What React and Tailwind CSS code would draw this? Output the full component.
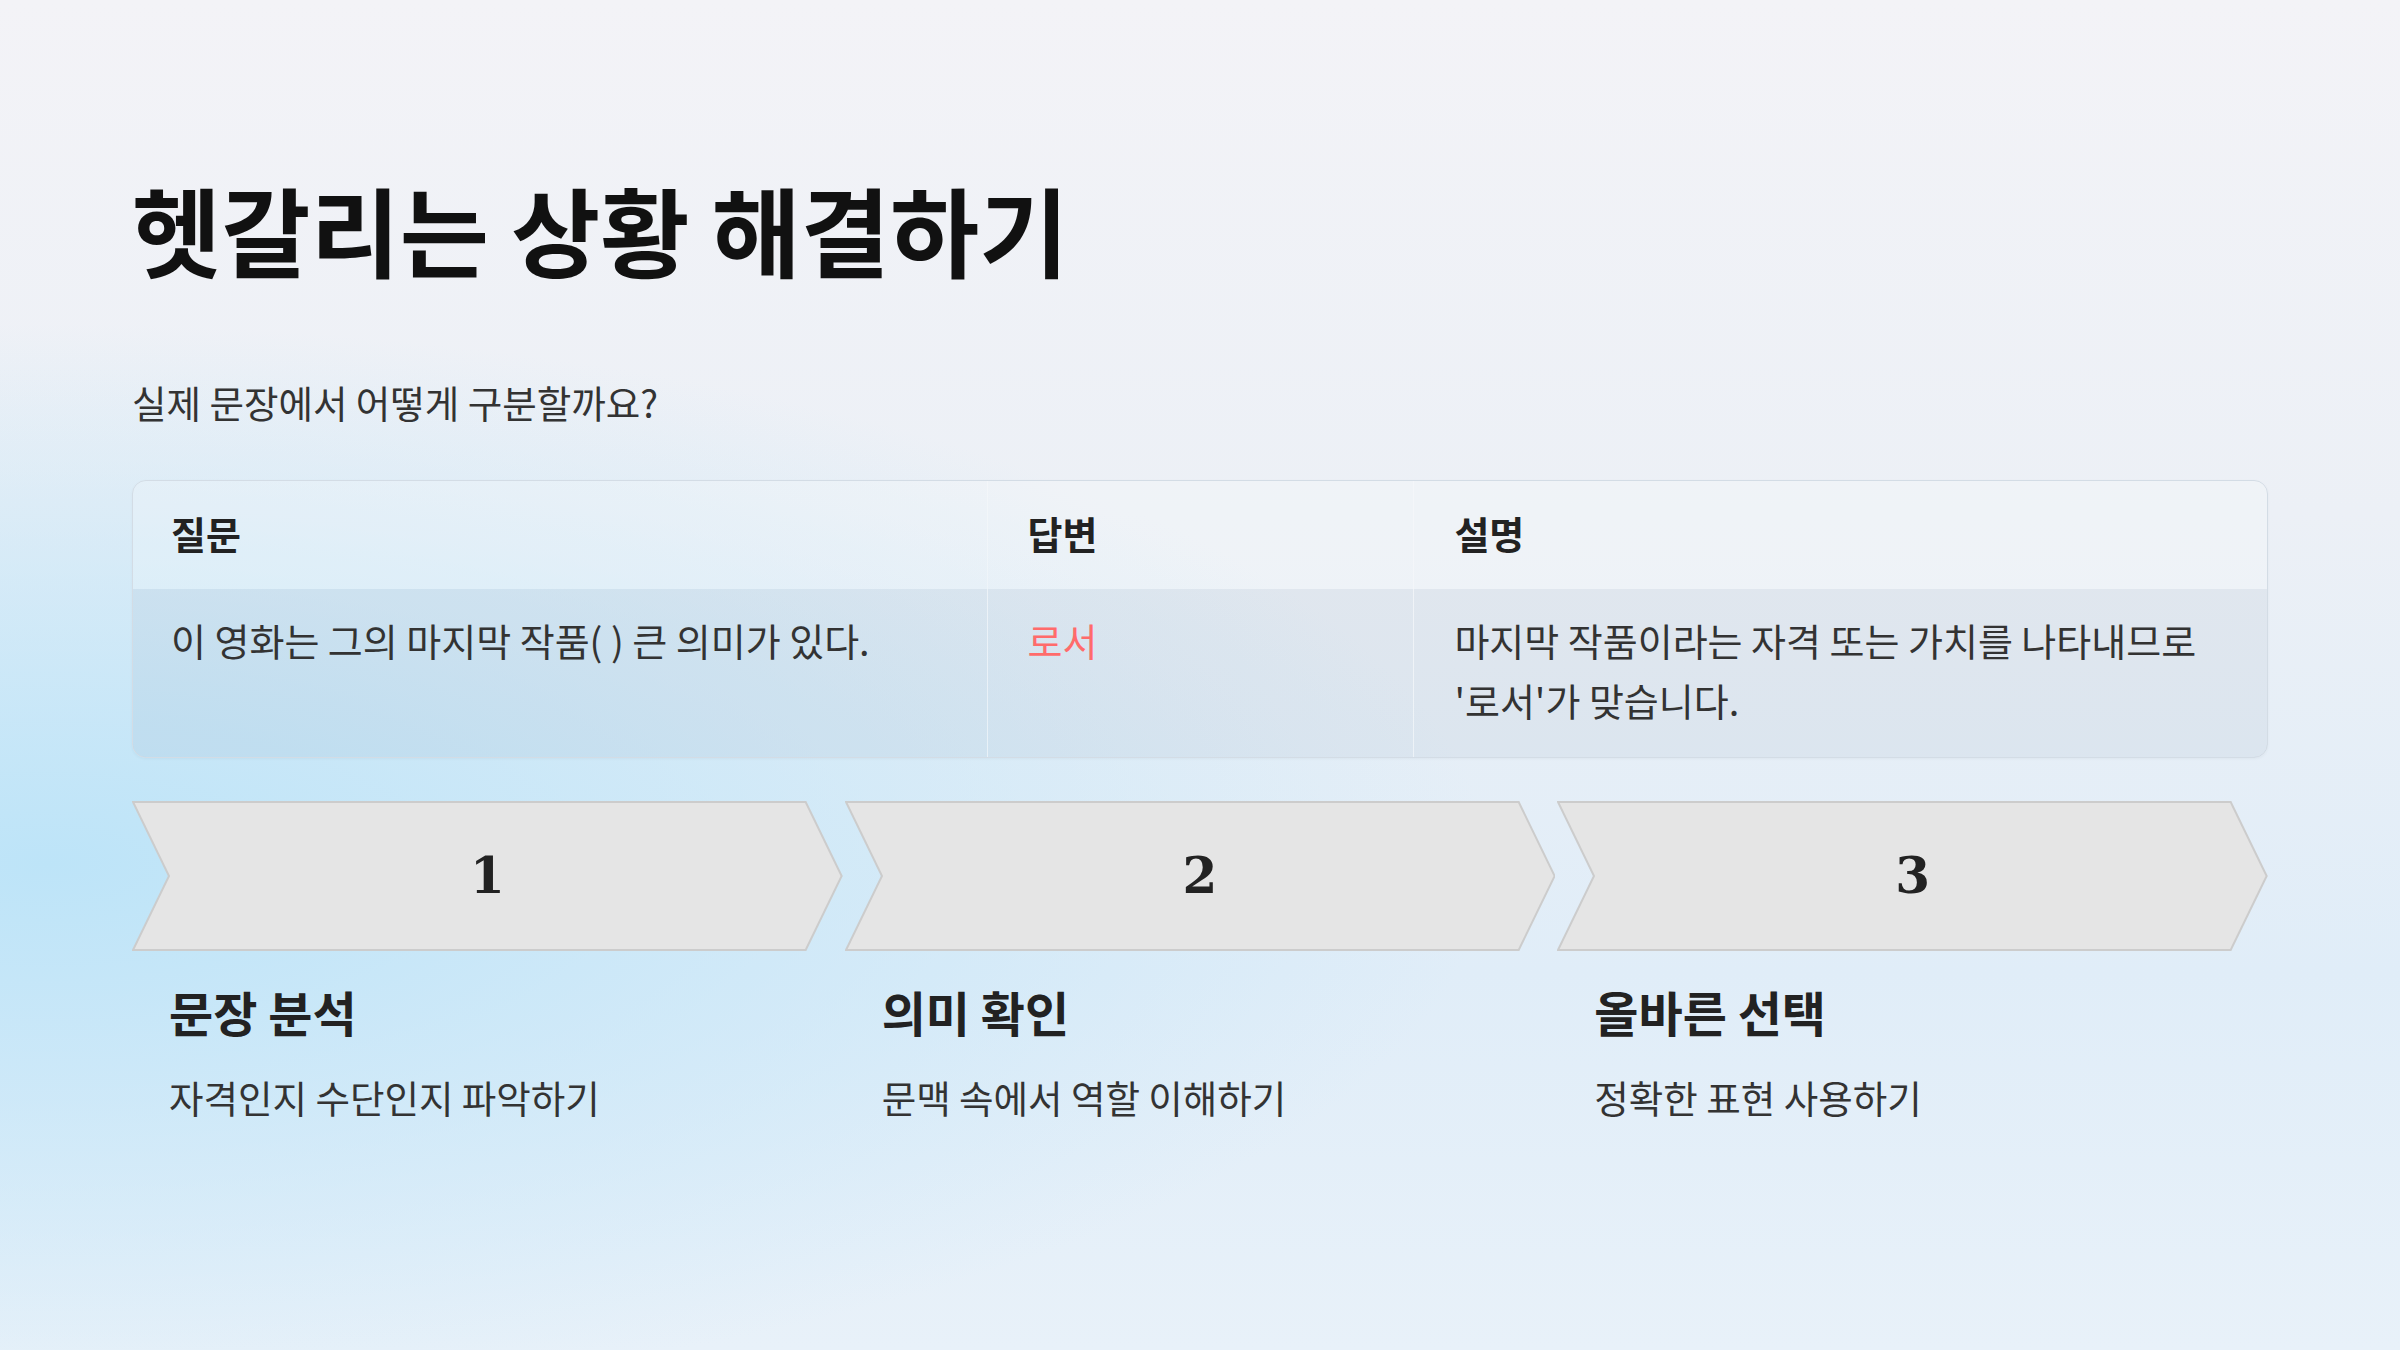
import React from 'react';

const rows = {
    question: '이 영화는 그의 마지막 작품( ) 큰 의미가 있다.',
    answer: '로서',
    reason: "마지막 작품이라는 자격 또는 가치를 나타내므로 '로서'가 맞습니다.",
};

const steps = [
    { num: '1', title: '문장 분석', desc: '자격인지 수단인지 파악하기' },
    { num: '2', title: '의미 확인', desc: '문맥 속에서 역할 이해하기' },
    { num: '3', title: '올바른 선택', desc: '정확한 표현 사용하기' },
];

const Chevron = ({ num }) => (
    <div className="relative h-[150px] flex items-center justify-center">
        <svg
            className="absolute inset-0 w-full h-full"
            viewBox="0 0 711 150"
            preserveAspectRatio="none"
        >
            <polygon
                points="1,1 674,1 710,75 674,149 1,149 37,75"
                fill="#e5e5e5"
                stroke="#cccccc"
                strokeWidth="2"
                vectorEffect="non-scaling-stroke"
            />
        </svg>
        <span className="relative font-['DejaVu_Serif',serif] font-bold text-[50px] leading-none text-[#222]">
            {num}
        </span>
    </div>
);

export default function App() {
    return (
        <div className="min-h-screen w-full font-['Noto_Sans_CJK_KR','Noto_Sans',sans-serif] bg-[image:radial-gradient(ellipse_60%_40%_at_2%_64%,#bde4f8_0%,rgba(196,230,248,0.6)_50%,rgba(220,236,248,0)_100%),linear-gradient(180deg,#f3f3f7_0%,#ecf0f6_38%,#e0edf8_72%,#e8f1f9_100%)]">
            <div className="px-[132px] pt-[170px] pb-20">

                {/* HEADER */}
                <h1 className="text-[97px] leading-[1.2] font-bold text-[#111]">
                    헷갈리는 상황 해결하기
                </h1>
                <p className="mt-[88px] text-[37.5px] leading-[1.5] text-[#333]">
                    실제 문장에서 어떻게 구분할까요?
                </p>

                {/* TABLE */}
                <div className="mt-[49px] rounded-[14px] border border-[#d3dce5] overflow-hidden shadow-[0_1px_3px_rgba(0,0,0,0.04)]">
                    <div className="grid grid-cols-[40%_20%_40%] bg-white/20">
                        <div className="px-[38px] pt-[22px] pb-[26px] text-[38px] leading-[60px] font-bold text-[#222]">질문</div>
                        <div className="px-10 pt-[22px] pb-[26px] text-[38px] leading-[60px] font-bold text-[#222] border-l border-white/30">답변</div>
                        <div className="px-10 pt-[22px] pb-[26px] text-[38px] leading-[60px] font-bold text-[#222] border-l border-white/30">설명</div>
                    </div>
                    <div className="grid grid-cols-[40%_20%_40%] bg-[#64748b]/[0.07]">
                        <div className="px-[38px] pt-[21px] pb-[27px] text-[38px] leading-[60px] text-[#333] break-keep">{rows.question}</div>
                        <div className="px-10 pt-[21px] pb-[27px] text-[38px] leading-[60px] text-[#ff6b6b] border-l border-white/50">{rows.answer}</div>
                        <div className="px-10 pt-[21px] pb-[27px] text-[38px] leading-[60px] text-[#333] border-l border-white/50 break-keep">{rows.reason}</div>
                    </div>
                </div>

                {/* STEPS */}
                <div className="mt-[43px] grid grid-cols-3 gap-[2px]">
                    {steps.map((s) => (
                        <div key={s.num}>
                            <Chevron num={s.num} />
                            <div className="pl-[37px]">
                                <h3 className="mt-[29px] text-[48px] leading-[1.3] font-bold text-[#222]">
                                    {s.title}
                                </h3>
                                <p className="mt-[27px] text-[37.5px] leading-[1.5] text-[#333]">
                                    {s.desc}
                                </p>
                            </div>
                        </div>
                    ))}
                </div>

            </div>
        </div>
    );
}
